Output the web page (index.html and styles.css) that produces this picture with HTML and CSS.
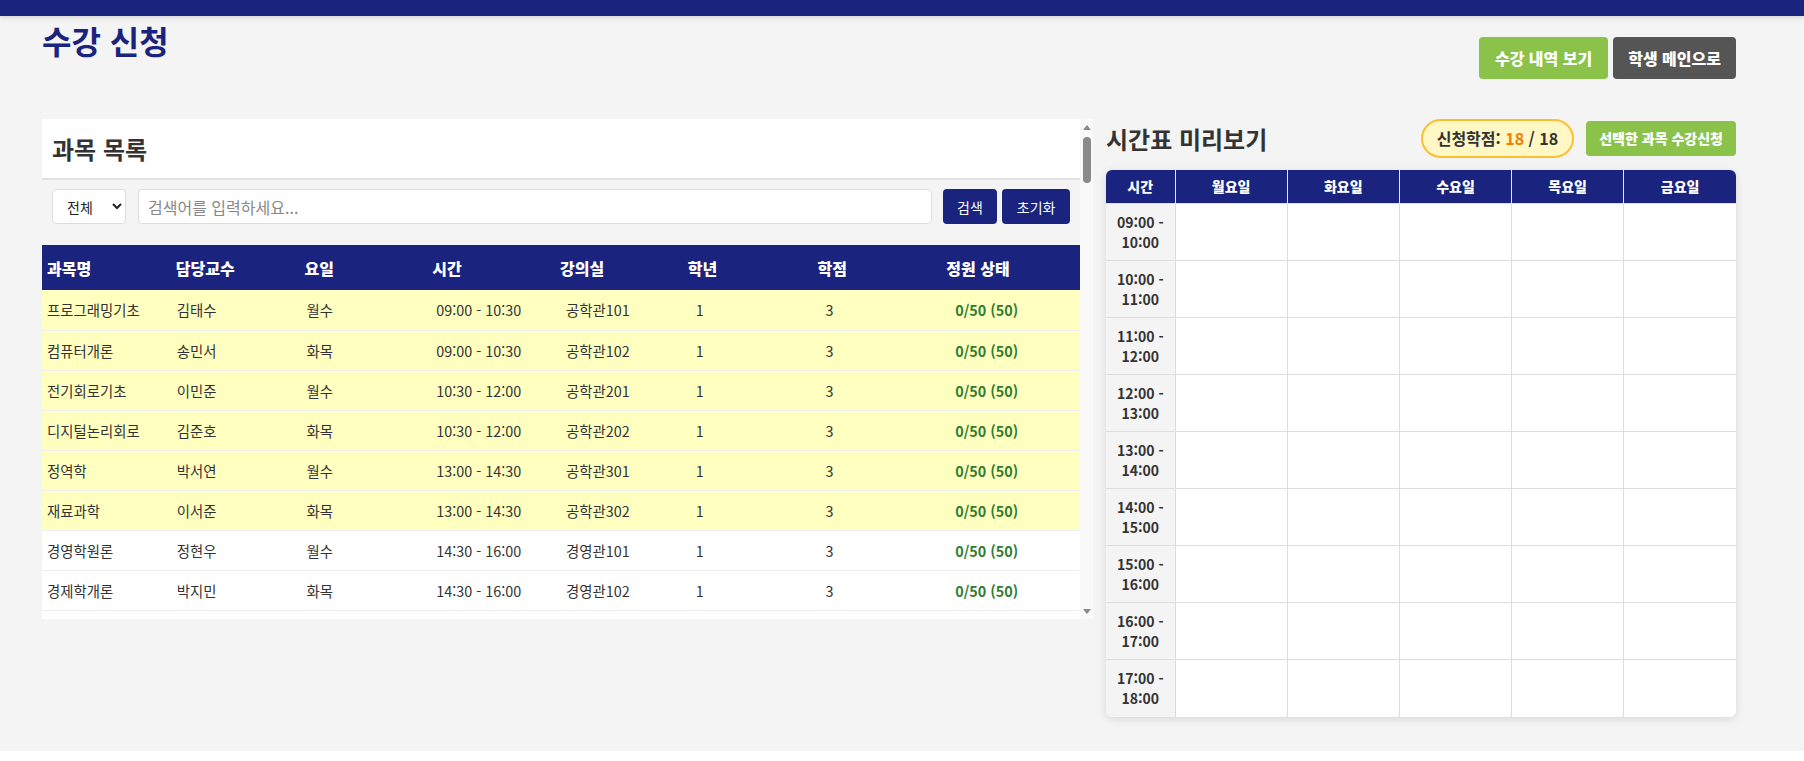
FILE: index.html
```html
<!DOCTYPE html>
<html lang="ko">
<head>
<meta charset="utf-8">
<title>수강 신청</title>
<link rel="stylesheet" href="styles.css">
</head>
<body>
<div class="topbar"></div>
<div class="app">
  <header class="page-header">
    <h1 class="page-title">수강 신청</h1>
    <div class="header-actions">
      <button class="btn btn-green">수강 내역 보기</button>
      <button class="btn btn-dark">학생 메인으로</button>
    </div>
  </header>

  <main class="layout">
    <section class="course-panel">
      <div class="course-scroll">
        <h2 class="panel-title">과목 목록</h2>
        <div class="search-bar">
          <select class="search-select"><option>전체</option><option>과목명</option><option>담당교수</option></select>
          <input class="search-input" type="text" placeholder="검색어를 입력하세요...">
          <button class="btn-navy btn-search">검색</button>
          <button class="btn-navy btn-reset">초기화</button>
        </div>
        <table class="course-table">
          <thead>
            <tr><th>과목명</th><th>담당교수</th><th>요일</th><th>시간</th><th>강의실</th><th>학년</th><th>학점</th><th>정원 상태</th></tr>
          </thead>
          <tbody>
            <tr class="selected"><td>프로그래밍기초</td><td>김태수</td><td>월수</td><td>09:00 - 10:30</td><td>공학관101</td><td>1</td><td>3</td><td class="status">0/50 (50)</td></tr>
            <tr class="selected"><td>컴퓨터개론</td><td>송민서</td><td>화목</td><td>09:00 - 10:30</td><td>공학관102</td><td>1</td><td>3</td><td class="status">0/50 (50)</td></tr>
            <tr class="selected"><td>전기회로기초</td><td>이민준</td><td>월수</td><td>10:30 - 12:00</td><td>공학관201</td><td>1</td><td>3</td><td class="status">0/50 (50)</td></tr>
            <tr class="selected"><td>디지털논리회로</td><td>김준호</td><td>화목</td><td>10:30 - 12:00</td><td>공학관202</td><td>1</td><td>3</td><td class="status">0/50 (50)</td></tr>
            <tr class="selected"><td>정역학</td><td>박서연</td><td>월수</td><td>13:00 - 14:30</td><td>공학관301</td><td>1</td><td>3</td><td class="status">0/50 (50)</td></tr>
            <tr class="selected"><td>재료과학</td><td>이서준</td><td>화목</td><td>13:00 - 14:30</td><td>공학관302</td><td>1</td><td>3</td><td class="status">0/50 (50)</td></tr>
            <tr><td>경영학원론</td><td>정현우</td><td>월수</td><td>14:30 - 16:00</td><td>경영관101</td><td>1</td><td>3</td><td class="status">0/50 (50)</td></tr>
            <tr><td>경제학개론</td><td>박지민</td><td>화목</td><td>14:30 - 16:00</td><td>경영관102</td><td>1</td><td>3</td><td class="status">0/50 (50)</td></tr>
            <tr><td>회계원리</td><td>최유진</td><td>월수</td><td>16:00 - 17:30</td><td>경영관201</td><td>1</td><td>3</td><td class="status">0/50 (50)</td></tr>
            <tr><td>마케팅원론</td><td>강도윤</td><td>화목</td><td>16:00 - 17:30</td><td>경영관202</td><td>1</td><td>3</td><td class="status">0/50 (50)</td></tr>
            <tr><td>대학영어</td><td>윤하은</td><td>월수</td><td>09:00 - 10:30</td><td>인문관101</td><td>1</td><td>2</td><td class="status">0/50 (50)</td></tr>
            <tr><td>글쓰기와표현</td><td>장민호</td><td>화목</td><td>09:00 - 10:30</td><td>인문관102</td><td>1</td><td>2</td><td class="status">0/50 (50)</td></tr>
            <tr><td>한국사의이해</td><td>임수빈</td><td>월수</td><td>10:30 - 12:00</td><td>인문관201</td><td>1</td><td>3</td><td class="status">0/50 (50)</td></tr>
            <tr><td>철학개론</td><td>한지우</td><td>화목</td><td>10:30 - 12:00</td><td>인문관202</td><td>1</td><td>3</td><td class="status">0/50 (50)</td></tr>
          </tbody>
        </table>
      </div>
      <div class="fake-scrollbar" aria-hidden="true">
        <span class="sb-arrow sb-up"></span>
        <div class="sb-track"><span class="sb-thumb"></span></div>
        <span class="sb-arrow sb-down"></span>
      </div>
    </section>

    <section class="timetable-panel">
      <div class="tt-header">
        <h2 class="tt-title">시간표 미리보기</h2>
        <div class="tt-actions">
          <span class="credit-badge">신청학점: <span class="credit-now">18</span> / 18</span>
          <button class="btn-apply">선택한 과목 수강신청</button>
        </div>
      </div>
      <div class="timetable-wrap">
        <table class="timetable">
          <thead>
            <tr><th class="col-time">시간</th><th>월요일</th><th>화요일</th><th>수요일</th><th>목요일</th><th>금요일</th></tr>
          </thead>
          <tbody>
            <tr><td class="time">09:00 - 10:00</td><td></td><td></td><td></td><td></td><td></td></tr>
            <tr><td class="time">10:00 - 11:00</td><td></td><td></td><td></td><td></td><td></td></tr>
            <tr><td class="time">11:00 - 12:00</td><td></td><td></td><td></td><td></td><td></td></tr>
            <tr><td class="time">12:00 - 13:00</td><td></td><td></td><td></td><td></td><td></td></tr>
            <tr><td class="time">13:00 - 14:00</td><td></td><td></td><td></td><td></td><td></td></tr>
            <tr><td class="time">14:00 - 15:00</td><td></td><td></td><td></td><td></td><td></td></tr>
            <tr><td class="time">15:00 - 16:00</td><td></td><td></td><td></td><td></td><td></td></tr>
            <tr><td class="time">16:00 - 17:00</td><td></td><td></td><td></td><td></td><td></td></tr>
            <tr><td class="time">17:00 - 18:00</td><td></td><td></td><td></td><td></td><td></td></tr>
          </tbody>
        </table>
      </div>
    </section>
  </main>
</div>
</body>
</html>
```

FILE: styles.css
```css
* { box-sizing: border-box; }

html, body {
  margin: 0;
  padding: 0;
  background: #ffffff;
  font-family: "Noto Sans CJK KR", "Noto Sans", sans-serif;
  color: #333;
}

.topbar {
  height: 16px;
  background: #1a237e;
  box-shadow: 0 2px 4px rgba(0, 0, 0, 0.12);
  position: relative;
  z-index: 1;
}

.app {
  background: #f4f4f4;
  padding: 4px 68px 34px 42px;
}

.page-header {
  display: flex;
  justify-content: space-between;
  align-items: flex-start;
}

.page-title {
  margin: 0;
  font-size: 32px;
  line-height: 40px;
  font-weight: 700;
  color: #1a237e;
}

.header-actions {
  display: flex;
  gap: 5px;
  margin-top: 17px;
}

.btn {
  border: none;
  border-radius: 4px;
  color: #fff;
  font-family: inherit;
  font-size: 16px;
  font-weight: 800;
  line-height: 22px;
  padding: 10px 16px;
}

.btn-green { background: #8bc34a; }
.btn-dark { background: #555555; padding: 10px 15px; }

.layout {
  display: grid;
  grid-template-columns: 1fr 630px;
  gap: 13px;
  margin-top: 40px;
  align-items: start;
}

/* ---------- course list ---------- */
.course-panel {
  display: flex;
  height: 500px;
}

.course-scroll {
  flex: 1;
  min-width: 0;
  height: 100%;
  overflow-y: auto;
  scrollbar-width: none;
}

.fake-scrollbar {
  width: 13px;
  flex: none;
  display: flex;
  flex-direction: column;
  align-items: center;
  background: #f9f9f9;
}

.sb-arrow {
  height: 16px;
  width: 13px;
  display: flex;
  align-items: center;
  justify-content: center;
}

.sb-arrow::before {
  content: "";
  width: 0;
  height: 0;
  border-left: 4px solid transparent;
  border-right: 4px solid transparent;
}

.sb-up::before { border-bottom: 5px solid #8a8a8a; }
.sb-down::before { border-top: 5px solid #8a8a8a; }

.sb-track {
  flex: 1;
  width: 13px;
  padding: 2px 2px 0 3px;
}

.sb-thumb {
  display: block;
  width: 8px;
  height: 46px;
  border-radius: 4px;
  background: #8a8a8a;
}

.panel-title {
  margin: 0;
  background: #fff;
  font-size: 24px;
  line-height: 29px;
  font-weight: 700;
  color: #333;
  padding: 15px 10px;
  border-bottom: 2px solid #e0e0e0;
}

.search-bar {
  display: flex;
  align-items: center;
  padding: 9px 10px 21px;
}

.search-select {
  width: 74px;
  height: 35px;
  border: 1px solid #dddddd;
  border-radius: 4px;
  background: #fff;
  font-family: inherit;
  font-size: 14px;
  color: #222;
  padding: 0 6px 0 10px;
  margin-right: 12px;
}

.search-input {
  flex: 1;
  min-width: 0;
  height: 35px;
  border: 1px solid #dddddd;
  border-radius: 4px;
  background: #fff;
  font-family: inherit;
  font-size: 16px;
  padding: 0 9px;
  color: #333;
}

.search-input::placeholder { color: #888; }

.btn-navy {
  height: 35px;
  border: none;
  border-radius: 4px;
  background: #1a237e;
  color: #fff;
  font-family: inherit;
  font-size: 14px;
  padding: 0 14.5px;
}

.btn-search { margin-left: 11px; }
.btn-reset { margin-left: 5px; }

.course-table {
  width: 100%;
  border-collapse: collapse;
  table-layout: fixed;
  background: #fff;
}

.course-table th {
  background: #1a237e;
  color: #fff;
  font-size: 16px;
  font-weight: 800;
  text-align: left;
  height: 45px;
  padding: 0 5px;
}

/* header labels sit slightly left of the body columns */
.course-table th:nth-child(2) { text-indent: -1px; }
.course-table th:nth-child(3) { text-indent: -2px; }
.course-table th:nth-child(4) { text-indent: -4px; }
.course-table th:nth-child(5) { text-indent: -6px; }
.course-table th:nth-child(6) { text-indent: -8px; }
.course-table th:nth-child(7) { text-indent: -8px; }
.course-table th:nth-child(8) { text-indent: -9px; }

.course-table td {
  font-size: 14.4px;
  color: #333;
  height: 40px;
  padding: 0 5px;
  border-bottom: 1px solid #eceef5;
  white-space: nowrap;
}

.course-table tr.selected td { background: #ffffc0; }

.course-table td.status {
  color: #2e7d32;
  font-weight: 700;
}

/* ---------- timetable ---------- */
.tt-header {
  display: flex;
  justify-content: space-between;
  align-items: center;
  height: 39px;
  margin-bottom: 12px;
}

.tt-title {
  margin: 0;
  font-size: 24px;
  line-height: 30px;
  font-weight: 700;
  color: #333;
}

.tt-actions {
  display: flex;
  align-items: center;
  gap: 12px;
}

.credit-badge {
  display: inline-block;
  background: #fff8c4;
  border: 2px solid #fbc02d;
  border-radius: 20px;
  padding: 6px 14px;
  font-size: 16px;
  line-height: 23px;
  font-weight: 700;
  color: #333;
}

.credit-now { color: #f57c00; }

.btn-apply {
  border: none;
  border-radius: 4px;
  background: #8bc34a;
  color: #fff;
  font-family: inherit;
  font-size: 14px;
  font-weight: 800;
  line-height: 19px;
  padding: 8px 13px;
}

.timetable-wrap {
  background: #fff;
  border-radius: 6px;
  overflow: hidden;
  box-shadow: 0 2px 8px rgba(0, 0, 0, 0.12);
}

.timetable {
  width: 100%;
  border-collapse: collapse;
  table-layout: fixed;
}

.timetable th {
  background: #1a237e;
  color: #fff;
  font-size: 14px;
  font-weight: 800;
  line-height: 17px;
  padding: 8px 4px;
  text-align: center;
  border-left: 1px solid #e8e8f0;
}

.timetable th:first-child { border-left: none; }

.timetable .col-time { width: 69px; }

.timetable td {
  border: 1px solid #dddddd;
  height: 57px;
  padding: 8px;
  font-size: 14px;
  line-height: 20px;
}

.timetable tr td:first-child { border-left: none; }
.timetable tr td:last-child { border-right: none; }
.timetable tbody tr:last-child td { border-bottom: none; }

.timetable td.time {
  background: #f4f4f4;
  text-align: center;
  font-weight: 600;
  color: #333;
  padding: 8px 6px;
}
```
